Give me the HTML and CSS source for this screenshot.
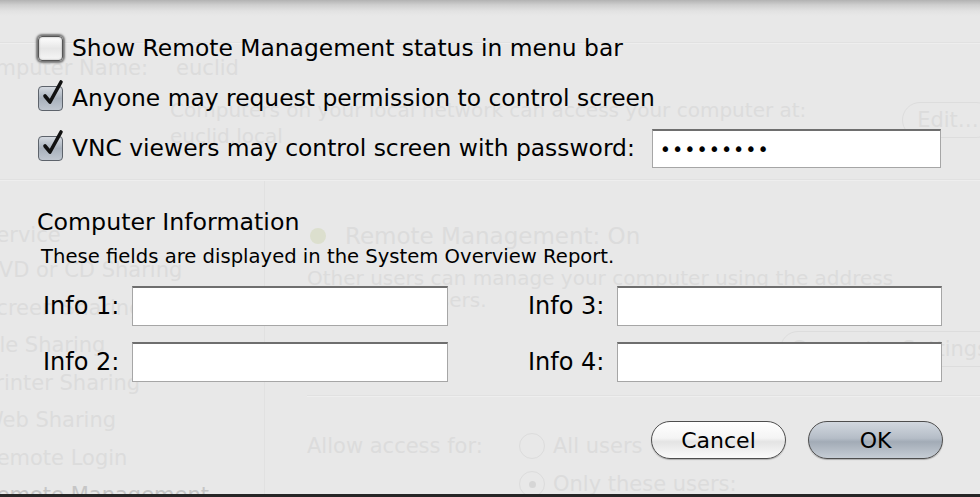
FILE: index.html
```html
<!DOCTYPE html>
<html>
<head>
<meta charset="utf-8">
<link rel="stylesheet" href="styles.css">
</head>
<body>
<div class="ghost">
  <div class="g-line g-line-top"></div>
  <div class="g-name"><span class="g-name-label">Computer Name:</span><span>euclid</span></div>
  <div class="g-access">
    <div class="g-access-text">
      <div>Computers on your local network can access your computer at:</div>
      <div>euclid.local</div>
    </div>
    <div class="g-btn g-edit">Edit…</div>
  </div>
  <div class="g-line g-line-mid"></div>
  <div class="g-cols">
    <div class="g-list">
      <div class="g-item">Service</div>
      <div class="g-item">DVD or CD Sharing</div>
      <div class="g-item">Screen Sharing</div>
      <div class="g-item">File Sharing</div>
      <div class="g-item">Printer Sharing</div>
      <div class="g-item">Web Sharing</div>
      <div class="g-item">Remote Login</div>
      <div class="g-item g-item-sel">Remote Management</div>
    </div>
    <div class="g-pane">
      <div class="g-status"><span class="g-dot"></span><span>Remote Management: On</span></div>
      <div class="g-desc">Other users can manage your computer using the address<br>euclid.local users.</div>
      <div class="g-settings-row"><div class="g-btn g-settings">Computer Settings…</div></div>
      <div class="g-line g-line-pane"></div>
      <div class="g-allow">
        <div class="g-allow-label">Allow access for:</div>
        <div class="g-radios">
          <div class="g-radio"><span class="g-circle"></span>All users</div>
          <div class="g-radio"><span class="g-circle g-circle-on"></span>Only these users:</div>
        </div>
      </div>
    </div>
  </div>
</div>

<div class="sheet">
  <div class="check-row">
    <span class="cb cb-focus"></span>
    <span class="label">Show Remote Management status in menu bar</span>
  </div>
  <div class="check-row">
    <span class="cb cb-on"><svg class="tick" viewBox="0 0 24 30" width="24" height="30"><path d="M5 17 L10 23 L21 3" fill="none" stroke="#111" stroke-width="3.6" stroke-linecap="round" stroke-linejoin="round"/></svg></span>
    <span class="label">Anyone may request permission to control screen</span>
  </div>
  <div class="check-row">
    <span class="cb cb-on"><svg class="tick" viewBox="0 0 24 30" width="24" height="30"><path d="M5 17 L10 23 L21 3" fill="none" stroke="#111" stroke-width="3.6" stroke-linecap="round" stroke-linejoin="round"/></svg></span>
    <span class="label">VNC viewers may control screen with password:</span>
    <span class="field field-pass">•••••••••</span>
  </div>

  <div class="section-title">Computer Information</div>
  <div class="section-sub">These fields are displayed in the System Overview Report.</div>

  <div class="info-grid">
    <span class="info-label">Info 1:</span>
    <span class="field field-info"></span>
    <span></span>
    <span class="info-label">Info 3:</span>
    <span class="field field-info"></span>
    <span class="info-label">Info 2:</span>
    <span class="field field-info"></span>
    <span></span>
    <span class="info-label">Info 4:</span>
    <span class="field field-info"></span>
  </div>

  <div class="buttons">
    <div class="btn btn-cancel">Cancel</div>
    <div class="btn btn-ok">OK</div>
  </div>
</div>
</body>
</html>
```

FILE: styles.css
```css
* { box-sizing: border-box; }
html, body { margin: 0; padding: 0; }
body {
  width: 980px;
  height: 497px;
  overflow: hidden;
  position: relative;
  background: #e8e8e8;
  font-family: "DejaVu Sans", "Liberation Sans", sans-serif;
  color: #000;
}

/* ---------- ghosted window behind the sheet ---------- */
.ghost {
  height: 497px;
  color: #dcdcdc;
  font-size: 21px;
  overflow: hidden;
  border-bottom: 3px solid #262626;
}
.g-line { height: 2px; background: #e1e1e1; border-bottom: 1px solid #eeeeee; }
.g-line-top { margin-top: 42px; }
.g-name {
  display: flex;
  gap: 28px;
  margin-left: -32px;
  height: 40px;
  align-items: center;
  margin-top: 4px;
}
.g-access {
  display: flex;
  justify-content: space-between;
  padding-left: 170px;
}
.g-access-text { font-size: 20px; line-height: 26px; padding-top: 9px; }
.g-btn {
  border: 1px solid #dddddd;
  border-radius: 18px;
  height: 36px;
  display: flex;
  align-items: center;
  justify-content: center;
}
.g-edit { width: 92px; margin-right: -14px; margin-top: 14px; }
.g-line-mid { margin-top: 30px; }
.g-cols { display: flex; }
.g-list {
  width: 282px;
  flex: none;
  border-right: 1px solid #e1e1e1;
  height: 320px;
  padding-top: 44px;
  margin-left: -17px;
}
.g-item { height: 37.5px; line-height: 37.5px; font-size: 21px; white-space: nowrap; }
.g-item:first-child { height: 27px; line-height: 20px; }
.g-item-sel { color: #c6c6c6; }
.g-pane { flex: 1; padding-left: 42px; padding-top: 40px; }
.g-status { display: flex; align-items: center; gap: 19px; font-size: 23px; height: 30px; padding-left: 3px; }
.g-dot { width: 16px; height: 16px; border-radius: 50%; background: #dcdfce; }
.g-desc { font-size: 20px; line-height: 22px; margin-top: 16px; }
.g-settings-row { display: flex; justify-content: flex-end; margin-top: 20px; margin-right: -40px; }
.g-settings { width: 240px; }
.g-line-pane { margin-top: 28px; }
.g-allow { display: flex; margin-top: 30px; }
.g-allow-label { width: 212px; line-height: 38px; }
.g-radios { display: flex; flex-direction: column; }
.g-radio { display: flex; align-items: center; gap: 8px; height: 38px; }
.g-circle { width: 26px; height: 26px; border: 1px solid #dcdcdc; border-radius: 50%; position: relative; }
.g-circle-on::after {
  content: ""; position: absolute; left: 9px; top: 9px; width: 7px; height: 7px; border-radius: 50%; background: #d6d6d6;
}

/* ---------- the sheet (lies over the ghosted window) ---------- */
.sheet {
  position: absolute;
  left: 0; top: 0;
  width: 980px;
  height: 494px;
  padding: 23px 37px 0 37px;
  background: linear-gradient(to bottom, #b2b2b2 0px, #cfcfcf 5px, #e2e2e2 11px, rgba(232,232,232,0) 16px);
}
.check-row {
  display: flex;
  align-items: center;
  height: 50px;
}
.label { font-size: 23.4px; white-space: nowrap; margin-left: 9px; }
.cb {
  width: 25px; height: 25px;
  border-radius: 4px;
  border: 1px solid #6c6c6c;
  background: linear-gradient(to bottom, #fefefe, #e6e6e6 50%, #f6f6f6);
  position: relative;
  flex: none;
  margin-left: 1px;
}
.cb-focus {
  box-shadow: 0 0 2px 2px #777, inset 0 0 2px #999;
  border-color: #555;
}
.cb-on {
  background: linear-gradient(to bottom, #d5dae1, #a8b1bc 50%, #c0c7d0);
  border-color: #5d636b;
}
.tick { position: absolute; left: 1px; top: -8px; }

.field {
  background: #fff;
  border: 1px solid #a6a6a6;
  border-top: 2px solid #6e6e6e;
}
.field-pass {
  width: 289px; height: 39px;
  margin-left: 17px;
  font-size: 19px;
  letter-spacing: 1px;
  padding-left: 7px;
  display: flex; align-items: center;
  color: #000;
}

.section-title { font-size: 23.7px; margin-top: 34px; height: 30px; line-height: 30px; }
.section-sub { font-size: 19.6px; margin-top: 8px; height: 24px; line-height: 24px; padding-left: 4px; }

.info-grid {
  display: grid;
  grid-template-columns: 89px 316px 80px 89px 325px;
  grid-auto-rows: 40px;
  row-gap: 16px;
  margin-top: 17px;
  padding-left: 6px;
  align-items: center;
}
.info-label { font-size: 24px; }
.field-info { height: 40px; }

.buttons {
  display: flex;
  justify-content: flex-end;
  gap: 22px;
  margin-top: 39px;
}
.btn {
  width: 135px; height: 38px;
  border-radius: 19px;
  border: 1px solid #4e4e4e;
  display: flex; align-items: center; justify-content: center;
  font-size: 22px;
}
.btn-cancel {
  background: linear-gradient(to bottom, #ffffff 0%, #f4f4f4 45%, #e4e4e4 55%, #fbfbfb 100%);
  box-shadow: 0 1px 1px rgba(0,0,0,0.25);
}
.btn-ok {
  background: linear-gradient(to bottom, #d2d8df 0%, #b5bdc7 45%, #a2abb6 55%, #c6cdd5 100%);
  box-shadow: 0 1px 1px rgba(0,0,0,0.25);
}
```
